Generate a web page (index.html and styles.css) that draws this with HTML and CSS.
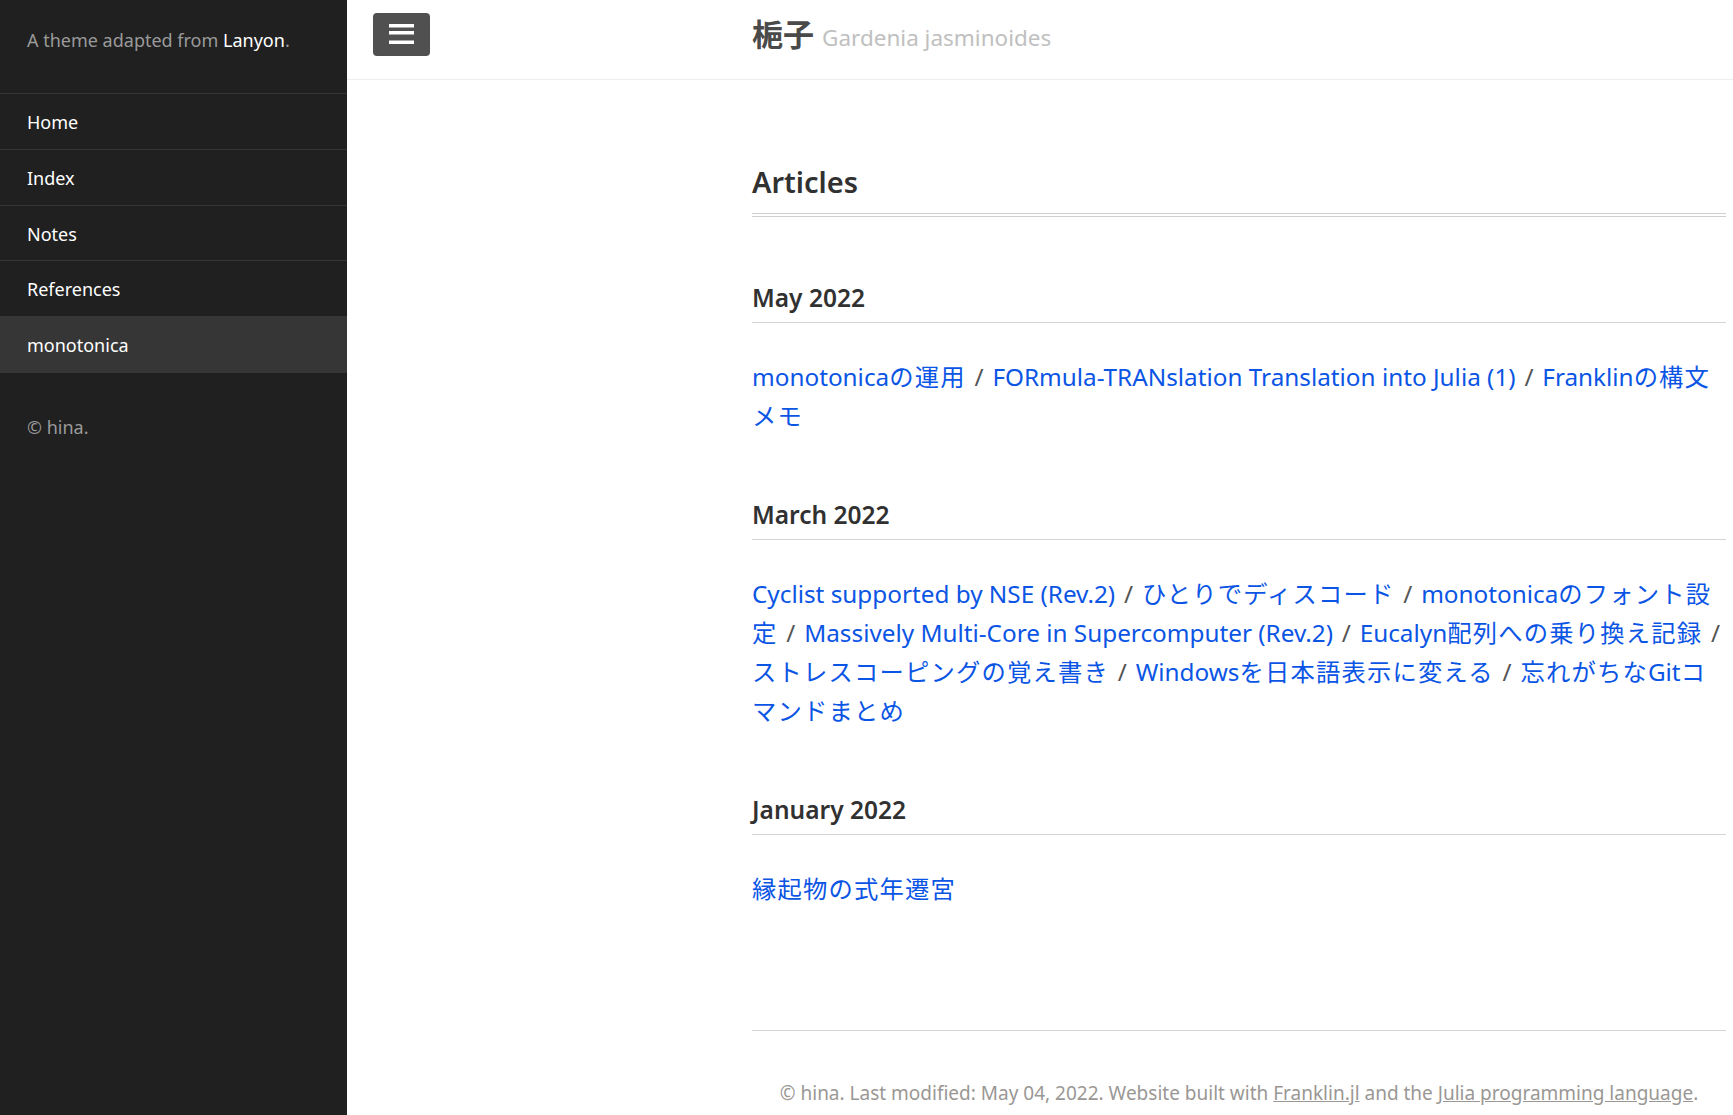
FILE: index.html
```html
<!DOCTYPE html>
<html lang="ja">
<head>
<meta charset="utf-8">
<title>梔子 Gardenia jasminoides</title>
<link rel="stylesheet" href="styles.css">
</head>
<body>
<div class="layout">
  <aside class="sidebar">
    <p class="sidebar-intro">A theme adapted from <a href="#">Lanyon</a>.</p>
    <nav class="sidebar-nav">
      <a class="nav-item" href="#">Home</a>
      <a class="nav-item" href="#">Index</a>
      <a class="nav-item" href="#">Notes</a>
      <a class="nav-item" href="#">References</a>
      <a class="nav-item active" href="#">monotonica</a>
    </nav>
    <p class="sidebar-copy">© hina.</p>
  </aside>
  <div class="main">
    <header class="masthead">
      <button class="toggle" type="button" aria-label="menu">
        <svg width="25" height="21" viewBox="0 0 25 21">
          <rect x="0" y="0" width="25" height="3.5" fill="#fff"/>
          <rect x="0" y="7" width="25" height="3.5" fill="#fff"/>
          <rect x="0" y="16.5" width="25" height="3.5" fill="#fff"/>
        </svg>
      </button>
      <h3 class="masthead-title"><a href="#">梔子</a> <small>Gardenia jasminoides</small></h3>
    </header>
    <main class="content">
      <h1 class="page-title">Articles</h1>

      <h2 class="month">May 2022</h2>
      <p class="links"><a href="#">monotonica<span class="ja">の運用</span></a> <span class="sep">/</span> <a href="#">FORmula-TRANslation Translation into Julia (1)</a> <span class="sep">/</span> <a href="#">Franklin<span class="ja">の構文メモ</span></a></p>

      <h2 class="month">March 2022</h2>
      <p class="links"><a href="#">Cyclist supported by NSE (Rev.2)</a> <span class="sep">/</span> <a href="#"><span class="ja">ひとりでディスコード</span></a> <span class="sep">/</span> <a href="#">monotonica<span class="ja">のフォント設定</span></a> <span class="sep">/</span> <a href="#">Massively Multi-Core in Supercomputer (Rev.2)</a> <span class="sep">/</span> <a href="#">Eucalyn<span class="ja">配列への乗り換え記録</span></a> <span class="sep">/</span> <a href="#"><span class="ja">ストレスコーピングの覚え書き</span></a> <span class="sep">/</span> <a href="#">Windows<span class="ja">を日本語表示に変える</span></a> <span class="sep">/</span> <a href="#"><span class="ja">忘れがちな</span>Git<span class="ja">コマンドまとめ</span></a></p>

      <h2 class="month">January 2022</h2>
      <p class="links"><a href="#"><span class="ja">縁起物の式年遷宮</span></a></p>

      <footer class="page-foot">
        <p>© hina. Last modified: May 04, 2022. Website built with <a href="#">Franklin.jl</a> and the <a href="#">Julia programming language</a>.</p>
      </footer>
    </main>
  </div>
</div>
</body>
</html>
```

FILE: styles.css
```css
* { box-sizing: border-box; }
html, body {
  margin: 0;
  padding: 0;
}
body {
  font-family: "Noto Sans", "Noto Sans CJK JP", sans-serif;
  color: #313131;
  background: #fff;
}
a { text-decoration: none; }

.layout {
  display: flex;
  min-height: 100vh;
}

.sidebar {
  width: 347px;
  flex: 0 0 347px;
  background: #202020;
  color: #9a9a9a;
  font-size: 18px;
  line-height: 24px;
}
.sidebar-intro {
  margin: 28px 27px 41px;
}
.sidebar-intro a { color: #fff; }
.sidebar-nav {
  display: flex;
  flex-direction: column;
  border-bottom: 1px solid #353535;
}
.nav-item {
  display: block;
  color: #fff;
  padding: 16px 27px 14.8px;
  border-top: 1px solid #353535;
}
.nav-item.active {
  background: #363636;
}
.sidebar-copy {
  margin: 42px 27px 0;
}

.main {
  flex: 1;
  min-width: 0;
}
.masthead {
  display: flex;
  align-items: center;
  height: 80px;
  border-bottom: 1px solid #eee;
  padding-left: 26px;
}
.toggle {
  width: 57px;
  height: 43px;
  margin-top: -10px;
  border: 0;
  padding: 0;
  border-radius: 4px;
  background: #505050;
  display: flex;
  align-items: center;
  justify-content: center;
}
.toggle svg { display: block; }
.masthead-title {
  margin: -10px 0 0 322px;
  font-size: 31px;
  font-weight: 700;
  line-height: 1.2;
}
.masthead-title a { color: #4a4a4a; }
.masthead-title small {
  font-size: 22.5px;
  font-weight: 400;
  color: #c0c0c0;
}

.content {
  padding: 83px 7px 0 405px;
}
.page-title {
  margin: 0;
  font-size: 29px;
  line-height: 38px;
  font-weight: 600;
  padding-bottom: 12px;
  border-bottom: 4px double #cfcfcf;
}
.month {
  margin: 65px 0 0;
  font-size: 24.5px;
  line-height: 31px;
  font-weight: 600;
  padding-bottom: 9px;
  border-bottom: 1px solid #d4d4d4;
}
.links + .month { margin-top: 64px; }
.links {
  margin: 34px 0 0;
  font-size: 24.3px;
  line-height: 39px;
}
.links a { color: #0b55e5; }
.ja { letter-spacing: 1.2px; }
.sep { color: #555; padding: 0 2.5px; }

.page-foot {
  margin-top: 122px;
  border-top: 1px solid #d4d4d4;
  text-align: center;
  color: #9a9794;
  font-size: 19px;
  line-height: 30px;
}
.page-foot p { margin: 47px 0 0; }
.page-foot a {
  color: #9a9794;
  text-decoration: underline;
}
```
